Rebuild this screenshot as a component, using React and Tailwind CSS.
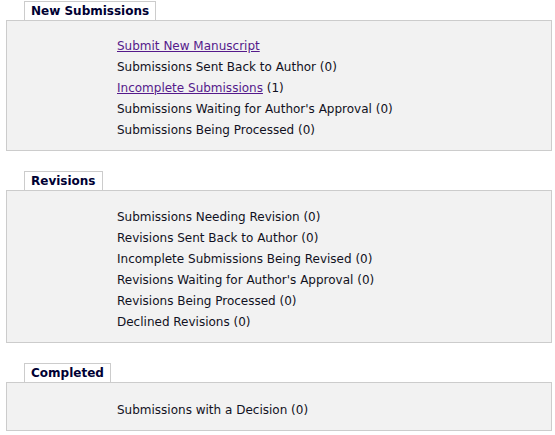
function Section({ title, children, padY }) {
  return (
    <div className="ml-[6px] mr-[3px]">
      <div className="ml-[18px] flex">
        <div className="h-[19px] border border-b-0 border-[#cccccc] bg-white px-[6px] text-[12px] font-bold leading-[18px] text-[#000033]">
          {title}
        </div>
      </div>
      <div className={`border border-[#cccccc] bg-[#f2f2f2] pl-[110px] ${padY}`}>
        {children}
      </div>
    </div>
  );
}

function Row({ children }) {
  return <div className="h-[21px] leading-[21px]">{children}</div>;
}

function Link({ children }) {
  return <a href="#" className="text-[#551a8b] underline">{children}</a>;
}

export default function App() {
  return (
    <div className="w-[555px] h-[435px] bg-white pt-px text-[12px] text-[#111122]" style={{ fontFamily: '"DejaVu Sans", Verdana, sans-serif' }}>
      <Section title="New Submissions" padY="pt-[15px] pb-[9px]">
        <Row><Link>Submit New Manuscript</Link></Row>
        <Row>Submissions Sent Back to Author (0)</Row>
        <Row><Link>Incomplete Submissions</Link> (1)</Row>
        <Row>Submissions Waiting for Author's Approval (0)</Row>
        <Row>Submissions Being Processed (0)</Row>
      </Section>
      <div className="h-[20px]" />
      <Section title="Revisions" padY="pt-[16px] pb-[9px]">
        <Row>Submissions Needing Revision (0)</Row>
        <Row>Revisions Sent Back to Author (0)</Row>
        <Row>Incomplete Submissions Being Revised (0)</Row>
        <Row>Revisions Waiting for Author's Approval (0)</Row>
        <Row>Revisions Being Processed (0)</Row>
        <Row>Declined Revisions (0)</Row>
      </Section>
      <div className="h-[20px]" />
      <Section title="Completed" padY="pt-[17px] pb-[9px]">
        <Row>Submissions with a Decision (0)</Row>
      </Section>
    </div>
  );
}
